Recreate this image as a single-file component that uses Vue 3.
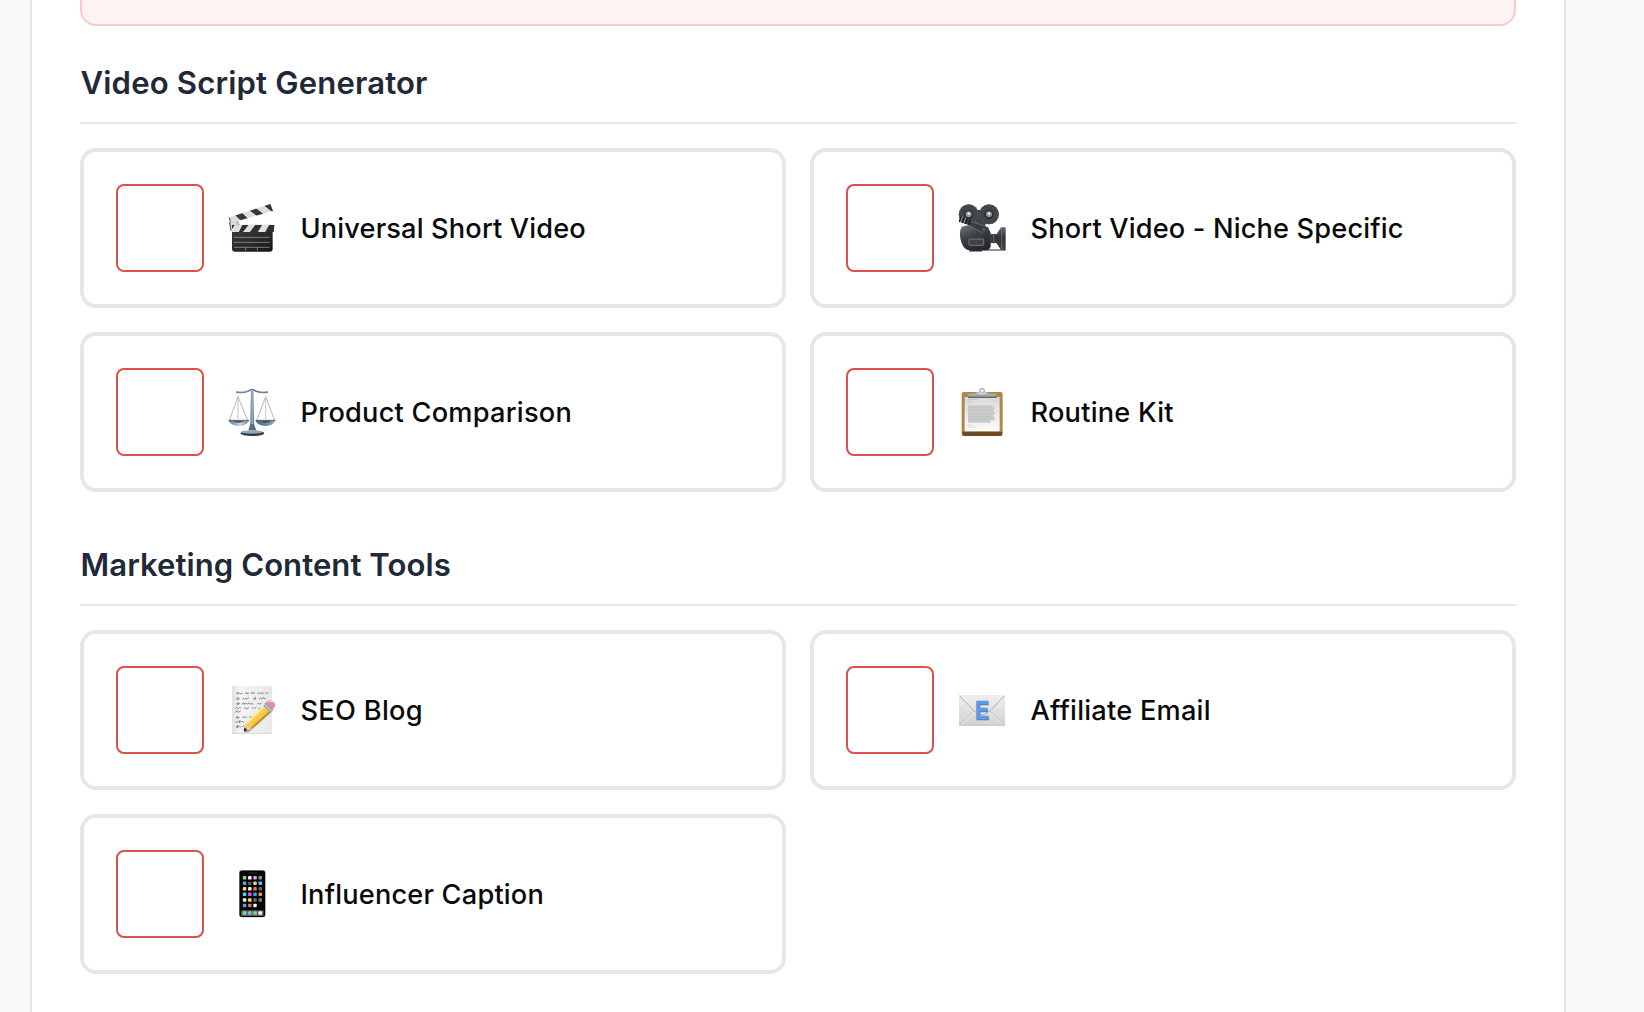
<script setup>
const sections = [
  {
    title: 'Video Script Generator',
    spacing: '0.16px',
    tools: [
      { id: 'clapper', label: 'Universal Short Video', spacing: '0.15px' },
      { id: 'camera', label: 'Short Video - Niche Specific', spacing: '0.16px' },
      { id: 'scales', label: 'Product Comparison', spacing: '0.23px' },
      { id: 'clipboard', label: 'Routine Kit', spacing: '0.22px' },
    ],
  },
  {
    title: 'Marketing Content Tools',
    spacing: '0.05px',
    tools: [
      { id: 'memo', label: 'SEO Blog', spacing: '0.3px' },
      { id: 'email', label: 'Affiliate Email', spacing: '0.24px' },
      { id: 'phone', label: 'Influencer Caption', spacing: '0.19px' },
    ],
  },
]

const phoneApps = [
  ['#7be07a', '#f5f5f5', '#d9a0e8', '#8e8e8e'],
  ['#4aa8ee', '#5c5c5c', '#e8c9a0', '#5cc8ee'],
  ['#f5e04a', '#f0f0f0', '#ee6a5c', '#6a6a6a'],
  ['#5cd8e8', '#d65ce8', '#3fa0ee', '#f59a2a'],
  ['#f0f0f0', '#f2e45a', '#6c6c6c', '#7d7d7d'],
  ['#4aa8ee', '#ee6a5c', '#f0f0f0'],
]
const dockApps = ['#7be07a', '#6cc0ee', '#7be07a', '#f5f5f5']
</script>

<template>
  <main class="page">
    <div class="panel">
      <div class="alert"></div>
      <section v-for="section in sections" :key="section.title" class="section">
        <h2 class="title"><span :style="{ letterSpacing: section.spacing }">{{ section.title }}</span></h2>
        <div class="grid">
          <label v-for="tool in section.tools" :key="tool.id" class="card">
            <span class="box"></span>

            <svg v-if="tool.id === 'clapper'" class="icon" viewBox="39 42 144 144">
              <defs>
                <linearGradient id="cb" x1="0" y1="0" x2="1" y2="1">
                  <stop offset="0" stop-color="#3c3a3c" /><stop offset=".5" stop-color="#2b292b" /><stop offset="1" stop-color="#151315" />
                </linearGradient>
                <clipPath id="arm"><path d="M40 83 166 42 174 63 50 98Z" /></clipPath>
                <clipPath id="bar"><path d="M51 104H179L176 126H51Z" /></clipPath>
              </defs>
              <path d="M42 88 70 92 79 117 45 122Z" fill="#b9bdc1" />
              <path d="M47 98 60 96 75 112 66 119 48 117Z" fill="#dadde0" />
              <path d="M44 96 48 121" stroke="#555" stroke-width="3" />
              <g clip-path="url(#arm)">
                <path d="M36 36H180V104H36Z" fill="#dcddde" />
                <path d="M56 71 78 65 103 90 82 96ZM98 57 119 52 149 75 130 81ZM144 44 170 36 180 66 172 66ZM36 84 42 80 48 92 40 94Z" fill="#353736" />
              </g>
              <path d="M51 122H173V176Q173 185 164 185H60Q51 185 51 176Z" fill="url(#cb)" />
              <g clip-path="url(#bar)">
                <path d="M50 102H180V128H50Z" fill="#303131" />
                <path d="M62 101H84L71 127H48L51 117ZM103 102H123L104 127H83ZM143 102H164L150 127H128Z" fill="#dfe0e1" />
              </g>
              <path d="M57 142H164M57 157H164M57 172H164M92 172V182M127 172V182" stroke="#aaa8aa" stroke-width="2" />
            </svg>

            <svg v-else-if="tool.id === 'camera'" class="icon" viewBox="39 42 144 144">
              <defs>
                <linearGradient id="cm" x1="0" y1="0" x2=".5" y2="1">
                  <stop offset="0" stop-color="#747b80" /><stop offset=".5" stop-color="#3b4045" /><stop offset="1" stop-color="#25282c" />
                </linearGradient>
                <linearGradient id="hood" x1="0" y1="0" x2="0" y2="1">
                  <stop offset="0" stop-color="#63686c" /><stop offset=".45" stop-color="#303438" /><stop offset="1" stop-color="#41454a" />
                </linearGradient>
              </defs>
              <path d="M82 180H182" stroke="#6d6f72" stroke-width="4" />
              <path d="M136 132H155L168 112H182V180H168L154 159H136Z" fill="url(#hood)" />
              <path d="M146 130V162M170 115V178" stroke="#777c81" stroke-width="2" />
              <path d="M50 110Q78 99 129 111L137 129V167Q137 177 125 181H74Q57 181 49 157Q40 127 50 110Z" fill="url(#cm)" />
              <circle cx="71" cy="73" r="30" fill="#414448" /><circle cx="132" cy="73" r="30" fill="#414448" />
              <path d="M76 60H125L121 110 78 91Z" fill="#414448" />
              <g fill="none" stroke="#54585c" stroke-width="2"><circle cx="71" cy="73" r="28" /><circle cx="132" cy="73" r="28" /></g>
              <g fill="#25282c"><circle cx="71" cy="74" r="13" /><circle cx="132" cy="74" r="13" /></g>
              <g fill="#8c969e"><circle cx="71" cy="73" r="9" /><circle cx="132" cy="73" r="9" /></g>
              <g fill="#e6edf2"><circle cx="71" cy="71" r="4" /><circle cx="132" cy="71" r="4" /></g>
              <path d="M45 83 76 91 121 108Q128 115 122 125L113 130 73 106 42 94Z" fill="#393d41" />
              <path d="M76 93 121 109M73 106 113 130" stroke="#767b80" stroke-width="2" />
              <path d="M48 80 43 96M57 82 51 99M67 85 60 102M76 89 70 106" stroke="#171a1c" stroke-width="4" />
              <path d="M53 80 47 97M63 83 56 100" stroke="#c8ced2" stroke-width="2" />
              <circle cx="116" cy="119" r="6" fill="#505459" />
              <rect x="72" y="147" width="44" height="19" rx="2" fill="#3e4246" stroke="#82868a" stroke-width="2.5" />
              <path d="M73 182H111" stroke="#292b2e" stroke-width="5" />
            </svg>

            <svg v-else-if="tool.id === 'scales'" class="icon" viewBox="39 39 144 144">
              <defs>
                <linearGradient id="post"><stop offset="0" stop-color="#405770" /><stop offset=".5" stop-color="#a9bfd2" /><stop offset="1" stop-color="#405266" /></linearGradient>
                <linearGradient id="pan"><stop offset="0" stop-color="#52697f" /><stop offset=".25" stop-color="#c3d7e7" /><stop offset=".55" stop-color="#455565" /><stop offset="1" stop-color="#92aec4" /></linearGradient>
              </defs>
              <path d="M69 65 43 136M69 65 98 136M152 65 125 136M152 65 179 136" fill="none" stroke="#8a939c" stroke-width="2" />
              <path d="M69 63V132M152 63V132" stroke="#b9c6d2" stroke-width="3" />
              <path d="M63 51Q83 55 101 48Q111 40 122 48Q139 55 159 51" fill="none" stroke="#687f97" stroke-width="5" />
              <path d="M66 50Q83 52 101 46" fill="none" stroke="#bdccda" stroke-width="2" />
              <path d="M108 48H115L117 153H106Z" fill="url(#post)" />
              <path d="M106 147H117L124 166H100Z" fill="#596e83" />
              <path d="M40 135H103Q98 152 72 153Q46 152 40 135ZM121 135H182Q177 152 152 153Q126 152 121 135Z" fill="url(#pan)" />
              <path d="M41 136H102M122 136H181" stroke="#53687b" stroke-width="3" />
              <path d="M54 138Q70 149 89 138ZM136 138Q152 149 169 138Z" fill="#4b4b49" />
              <ellipse cx="112" cy="175" rx="36" ry="8" fill="#2f3a46" />
              <ellipse cx="110" cy="171" rx="32" ry="5" fill="#93a8bb" />
            </svg>

            <svg v-else-if="tool.id === 'clipboard'" class="icon" viewBox="39 39 144 144">
              <defs>
                <linearGradient id="paper" x1="0" y1="0" x2="0" y2="1"><stop offset="0" stop-color="#d9d9da" /><stop offset="1" stop-color="#fbfbfb" /></linearGradient>
                <linearGradient id="clip" x1="0" y1="0" x2="0" y2="1"><stop offset="0" stop-color="#c5cad0" /><stop offset="1" stop-color="#8c929b" /></linearGradient>
              </defs>
              <rect x="50" y="51" width="123" height="132" rx="6" fill="#ad8849" />
              <path d="M52 170H171V177Q171 183 165 183H58Q52 183 52 177Z" fill="#704923" />
              <path d="M59 66H164V169H59Z" fill="url(#paper)" />
              <path d="M68 73H99M68 81H84" stroke="#c0c0c0" stroke-width="2" />
              <path d="M69 91H142V97H149V103H145V110H151V118H146V127H150V136H137V143H69Z" fill="#cbcbcc" />
              <path d="M69 98H139M69 107H145M69 116H140M69 125H145M69 134H136" stroke="#bebebf" stroke-width="2" stroke-dasharray="10 2 5 1" />
              <path d="M68 151H84M68 156H94" stroke="#d2d2d2" stroke-width="2" />
              <circle cx="111" cy="48" r="7" fill="#fff" stroke="#a8afb7" stroke-width="4" />
              <path d="M94 52Q102 54 105 49H117Q120 54 128 52L130 56H151Q156 57 155 69H69Q68 57 73 56H92Z" fill="url(#clip)" />
              <path d="M69 67H155" stroke="#6d6765" stroke-width="4" />
              <path d="M99 54Q111 60 124 54" fill="none" stroke="#e0e7ed" stroke-width="3" />
            </svg>

            <svg v-else-if="tool.id === 'memo'" class="icon" viewBox="39 39 144 144">
              <defs>
                <linearGradient id="sheet"><stop offset="0" stop-color="#e1e1e1" /><stop offset=".2" stop-color="#f4f4f4" /><stop offset="1" stop-color="#e8e8e8" /></linearGradient>
                <linearGradient id="wood" x1="0" y1="0" x2="1" y2="1"><stop offset=".2" stop-color="#ffe680" /><stop offset=".55" stop-color="#f4c342" /><stop offset=".9" stop-color="#c78918" /></linearGradient>
              </defs>
              <rect x="51" y="39" width="120" height="143" fill="url(#sheet)" />
              <path d="M52 181H170" stroke="#cbcbcb" stroke-width="2" />
              <g fill="none" stroke="#4a4a4a" stroke-width="1.8">
                <path d="M64 64l4-6 2 5 4-3 4 3 5-2M90 63l5-5 2 5 5-3M108 62l3-5 3 5 6-3M126 62l3-3 4 3 4-3 4 4 5-4M150 61l3-2 3 3 4-3" />
                <path d="M63 79l7-5-2 6 6-3M81 79l4-3 4 3 4-4 3 4 6-5M115 78l6-5-2 6 5-3M132 78l4-3 4 3 5-5 3 5 5-3" />
                <path d="M63 94l7-5-2 6 7-4M80 94l6-5 1 5 7-4 4 4 4-5 4 5 5-3 4 3M126 94l4-4 4 4 6-5M148 94l6-4" />
                <path d="M61 107l5-4 4 4 4-4 5 4M87 107l5-4 3 5 7-4M110 107l4-4 4 4 6-5M130 107l5-3" />
                <path d="M61 118l6-5 3 5 7-4M62 135l6-5-1 6 7-4M82 134l5-3 4 3 5-3M102 134l4-3 5 3" />
                <path d="M61 149l6-4 3 3 5-6-2 7 8-4 6 3M62 163l7-6-3 7 7-4 5 3M81 162l6-5" />
              </g>
              <path d="M85 170 90 179 103 176 174 113 168 108Z" fill="#5e5e5e" opacity=".55" />
              <path d="M90 154 145 98 167 118 110 168 88 174Z" fill="url(#wood)" />
              <path d="M94 152 148 100" stroke="#ffec8b" stroke-width="5" />
              <path d="M107 168 165 116" stroke="#bd8521" stroke-width="4" />
              <path d="M90 153 96 151 103 157 111 167 88 175Z" fill="#edca91" />
              <path d="M88 163 97 171 87 176Z" fill="#252525" />
              <path d="M145 98 154 88 176 108 166 119Z" fill="#9aa3ad" />
              <path d="M149 94 170 115" stroke="#dce2e6" stroke-width="3" />
              <path d="M153 87Q160 78 173 85Q184 92 179 101L171 112Q168 99 153 87Z" fill="#e88d91" />
              <path d="M157 86Q165 81 173 88" fill="none" stroke="#ffc0c1" stroke-width="4" />
            </svg>

            <svg v-else-if="tool.id === 'email'" class="icon" viewBox="39 39 144 144">
              <defs>
                <linearGradient id="env" x1="0" y1="0" x2="0" y2="1"><stop offset="0" stop-color="#efefef" /><stop offset="1" stop-color="#d2d2d2" /></linearGradient>
              </defs>
              <rect x="42" y="66" width="138" height="92" rx="1" fill="url(#env)" />
              <path d="M44 155 88 113M178 155 133 113" stroke="#bdbdbd" stroke-width="2" />
              <path d="M47 157 91 116M175 157 131 116" stroke="#f5f5f5" stroke-width="2" />
              <path d="M43 68 91 117Q111 134 131 117L179 68" fill="none" stroke="#a9abad" stroke-width="3" />
              <path d="M47 67 94 114Q111 129 128 114L175 67" fill="none" stroke="#f4f4f4" stroke-width="2" />
              <path d="M43 157H180" stroke="#bbb" stroke-width="2" />
              <g transform="translate(111 0) scale(.82 1)">
                <text x="2" y="142" class="envelope-letter shade">E</text>
                <text x="0" y="138" class="envelope-letter">E</text>
              </g>
            </svg>

            <svg v-else class="icon" viewBox="39 39 144 144">
              <rect x="72" y="39" width="80" height="142" rx="9" fill="#858585" />
              <rect x="74" y="41" width="76" height="139" rx="7" fill="#050505" />
              <path d="M98 48H126" stroke="#222" stroke-width="4" />
              <rect x="78" y="160" width="68" height="17" rx="3" fill="#626262" />
              <g v-for="(row, r) in phoneApps" :key="r">
                <rect v-for="(color, c) in row" :key="c" :x="83.5 + c * 15.7" :y="57 + r * 16.6" width="10.5" height="10.5" rx="2.5" :fill="color" />
              </g>
              <rect v-for="(color, c) in dockApps" :key="'d' + c" :x="83.5 + c * 15.7" y="163" width="10.5" height="10.5" rx="2.5" :fill="color" />
            </svg>

            <span class="label" :style="{ letterSpacing: tool.spacing }">{{ tool.label }}</span>
          </label>
        </div>
      </section>
    </div>
  </main>
</template>

<style>
body {
  background: #f9fafc;
  overflow: hidden;
}
</style>

<style scoped>
.page {
  height: 1012px;
  overflow: hidden;
  padding: 0 78px 0 30px;
  box-sizing: border-box;
  font-family: Inter, "Liberation Sans", sans-serif;
}
.panel {
  height: 1012px;
  box-sizing: border-box;
  padding: 0 48px;
  border: solid #e5e5e6;
  border-width: 0 2px;
  background: #fff;
}
.alert {
  height: 26px;
  box-sizing: border-box;
  border: 2px solid #f7cbca;
  border-top: 0;
  border-radius: 0 0 16px 16px;
  background: #fdf3f2;
  margin-bottom: 32px;
}
.section {
  margin-bottom: 48px;
}
.title {
  margin: 0 0 24px;
  padding: 1px 0 15px 0.5px;
  border-bottom: 2px solid #e5e7eb;
  color: #1f2937;
  font-size: 31.1px;
  font-weight: 600;
  line-height: 48px;
}
.grid {
  display: grid;
  grid-template-columns: 1fr 1fr;
  gap: 24px;
}
.card {
  display: flex;
  align-items: center;
  gap: 24px;
  height: 160px;
  box-sizing: border-box;
  padding: 0 32px;
  border: 4px solid #e5e7eb;
  border-radius: 16px;
}
.box {
  width: 88px;
  height: 88px;
  box-sizing: border-box;
  border: 2px solid #dc524b;
  border-radius: 8px;
}
.icon {
  width: 48px;
  height: 48px;
  flex: none;
}
.label {
  padding: 1px 0 0 0.5px;
  color: #0a0a0a;
  font-size: 27.2px;
  font-weight: 450;
  line-height: 42px;
  white-space: nowrap;
}
.envelope-letter {
  fill: #5a9bee;
  stroke: #5a9bee;
  stroke-width: 2px;
  font-family: "Liberation Sans", sans-serif;
  font-size: 76px;
  font-weight: 700;
  text-anchor: middle;
}
.shade {
  fill: #667a91;
  stroke: #667a91;
}
</style>
